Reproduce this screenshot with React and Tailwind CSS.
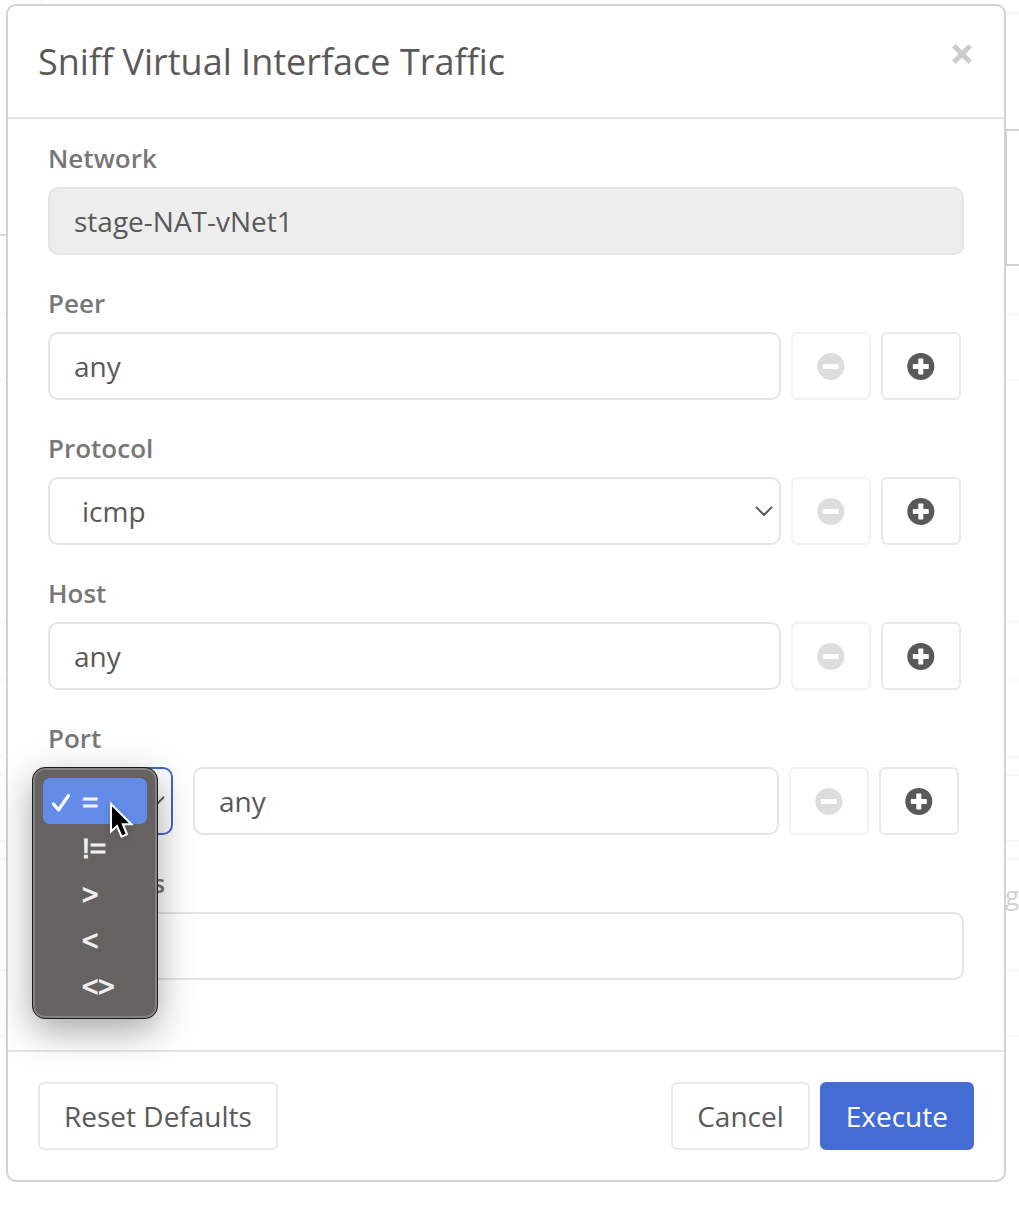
import { useState } from "react";

const fieldBase =
  "h-[68px] w-full min-w-0 rounded-[10px] border-2 text-[28px] leading-9 text-[#595959] outline-none";
const inputClass = `${fieldBase} border-[#e5e5e5] bg-white px-6`;
const readOnlyClass = `${fieldBase} border-[#e5e5e5] bg-[#ededed] px-6`;
const selectClass = `${fieldBase} appearance-none border-[#e5e5e5] bg-white pr-6 pl-8`;
const activeSelectClass = `${fieldBase} appearance-none border-[#3f68cf] bg-white pr-6 pl-8`;

function Chevron() {
  return (
    <svg
      viewBox="0 0 18 12"
      fill="none"
      aria-hidden="true"
      className="pointer-events-none absolute top-7 right-2 h-3 w-[18px]"
    >
      <path d="M1.5 2.4 L9 10 L16.5 2.4" stroke="#595959" strokeWidth="2" strokeLinecap="round" strokeLinejoin="round" />
    </svg>
  );
}

function CircleIcon({ plus }) {
  return (
    <svg viewBox="0 0 28 28" aria-hidden="true" className="size-7">
      <circle cx="13.8" cy="14.4" r="13.5" fill="#595959" />
      <rect x="5.8" y="12" width="16" height="5" rx="0.8" fill="#fff" />
      {plus && <rect x="11.3" y="6.5" width="5" height="16" rx="0.8" fill="#fff" />}
    </svg>
  );
}

function RowButtons({ name }) {
  const button = "flex h-[68px] w-20 shrink-0 items-center justify-center rounded-md border-2 bg-white";
  return (
    <>
      <button type="button" disabled aria-label={`Remove ${name}`} className={`${button} border-[#f2f2f2] [&>svg]:opacity-20`}>
        <CircleIcon />
      </button>
      <button type="button" aria-label={`Add ${name}`} className={`${button} border-[#e8e8e8]`}>
        <CircleIcon plus />
      </button>
    </>
  );
}

function Field({ id, label, children }) {
  return (
    <div>
      <label htmlFor={id} className="mb-[11px] block h-9 w-fit text-[26px] leading-9 font-semibold text-[#777777]">
        {label}
      </label>
      {children}
    </div>
  );
}

function Cursor() {
  return (
    <svg
      viewBox="0 0 26 40"
      aria-hidden="true"
      className="pointer-events-none absolute top-[34px] left-[60px] z-10 h-10 w-[26px] drop-shadow-md"
    >
      <path
        d="M3 3 V30.5 L9 25 L13.6 35.6 L19 33.3 L14.8 23.2 H23.4 Z"
        fill="#000"
        stroke="#fff"
        strokeWidth="2"
      />
    </svg>
  );
}

const operators = ["=", "!=", ">", "<", "<>"];

function OperatorMenu({ value, onPick }) {
  return (
    <ul
      role="listbox"
      aria-label="Port operator"
      className="absolute top-0 -left-4 z-10 w-[126px] rounded-[13px] border border-[#1c1c1c] bg-[#666262] p-[10px] shadow-[0_12px_36px_rgba(0,0,0,0.35)] inset-ring-2 inset-ring-[#858282]"
    >
      {operators.map((op) => (
        <li
          key={op}
          role="option"
          aria-selected={op === value}
          onClick={() => onPick(op)}
          className="flex h-[46px] items-center rounded-[7px] pt-1 pl-2 font-['Liberation_Sans',sans-serif] text-[28px] leading-[42px] text-[#f0f0f0] [-webkit-text-stroke:1px] aria-selected:bg-[#648be8]"
        >
          <span className="w-[31px]">
            {op === value && (
              <svg viewBox="0 0 20 20" fill="none" aria-hidden="true" className="size-5">
                <path d="M2.5 11 L7.5 17 L17.5 2.5" stroke="#fff" strokeWidth="3.2" strokeLinecap="round" strokeLinejoin="round" />
              </svg>
            )}
          </span>
          {op}
        </li>
      ))}
    </ul>
  );
}

function Backdrop() {
  return (
    <div aria-hidden="true" className="absolute inset-0 overflow-hidden">
      <div className="h-[14px] border-b-2 border-[#f6f6f6]">
        <div className="h-full w-[43px] border-r-2 border-[#f6f6f6]" />
      </div>
      <div className="flex h-[222px]">
        <div className="w-1.5 border-b-2 border-[#d0daf5]" />
        <div className="mt-[115px] ml-auto h-[137px] w-[14px] border-2 border-r-0 border-[#d2d2d2]" />
      </div>
      <div className="h-[79px] border-b-2 border-[#f8f8f8]" />
      <div className="h-[66px] border-b-2 border-[#f8f8f8]" />
      <div className="h-[242px] border-b-2 border-[#f8f8f8]" />
      <div className="h-[58px] border-b-2 border-[#f8f8f8]" />
      <div className="h-[77px] border-b-2 border-[#f8f8f8]" />
      <div className="h-[18px] border-b-2 border-[#f8f8f8]" />
      <div className="h-[66px] border-b-2 border-[#f8f8f8]" />
      <div className="h-[18px] border-b-2 border-[#f8f8f8]" />
      <div className="flex h-[111px] justify-end border-b-2 border-[#f8f8f8] pt-[17px] text-[26px] leading-9 text-[#d2d2d2]">g</div>
      <div className="h-[66px] border-b-2 border-[#f8f8f8]" />
    </div>
  );
}

export default function App() {
  const [operator, setOperator] = useState("=");
  const footerButton = "h-[68px] rounded-md border-2 px-6 text-[28px] leading-9";

  return (
    <div className="relative min-h-screen bg-white font-['Open_Sans',sans-serif] text-[#595959]">
      <Backdrop />
      <div className="relative pt-1 pr-[13px] pb-[31px] pl-1.5">
        <form
          role="dialog"
          aria-labelledby="dialog-title"
          onSubmit={(e) => e.preventDefault()}
          className="rounded-[10px] border-2 border-[#d2d2d2] bg-white"
        >
          <header className="flex h-[113px] items-center justify-between border-b-2 border-[#e5e5e5] px-[30px]">
            <h1 id="dialog-title" className="text-4xl">
              Sniff Virtual Interface Traffic
            </h1>
            <button type="button" aria-label="Close" className="mb-4">
              <svg viewBox="0 0 24 24" aria-hidden="true" className="size-6">
                <path d="M5.6 5.6 L18.4 18.4 M18.4 5.6 L5.6 18.4" stroke="#cccccc" strokeWidth="5" strokeLinecap="square" />
              </svg>
            </button>
          </header>

          <main className="flex flex-col gap-[30px] px-10 pt-[21px] pb-[70px]">
            <Field id="network" label="Network">
              <input id="network" type="text" readOnly value="stage-NAT-vNet1" className={readOnlyClass} />
            </Field>

            <Field id="peer" label="Peer">
              <div className="flex gap-[10px] pr-[3px]">
                <input id="peer" type="text" defaultValue="any" className={inputClass} />
                <RowButtons name="peer" />
              </div>
            </Field>

            <Field id="protocol" label="Protocol">
              <div className="flex gap-[10px] pr-[3px]">
                <div className="relative min-w-0 flex-1">
                  <select id="protocol" defaultValue="icmp" className={selectClass}>
                    <option>any</option>
                    <option>icmp</option>
                    <option>tcp</option>
                    <option>udp</option>
                  </select>
                  <Chevron />
                </div>
                <RowButtons name="protocol" />
              </div>
            </Field>

            <Field id="host" label="Host">
              <div className="flex gap-[10px] pr-[3px]">
                <input id="host" type="text" defaultValue="any" className={inputClass} />
                <RowButtons name="host" />
              </div>
            </Field>

            <Field id="port" label="Port">
              <div className="flex gap-[10px] pr-[5px]">
                <div className="relative mr-[10px] w-[125px] shrink-0">
                  <select
                    aria-label="Operator"
                    value={operator}
                    onChange={(e) => setOperator(e.target.value)}
                    className={activeSelectClass}
                  >
                    {operators.map((op) => (
                      <option key={op}>{op}</option>
                    ))}
                  </select>
                  <Chevron />
                  <OperatorMenu value={operator} onPick={setOperator} />
                  <Cursor />
                </div>
                <input id="port" type="text" defaultValue="any" className={inputClass} />
                <RowButtons name="port" />
              </div>
            </Field>

            <Field id="flags" label="TCP Flags">
              <input id="flags" type="text" className={inputClass} />
            </Field>
          </main>

          <footer className="flex gap-[10px] border-t-2 border-[#e5e5e5] p-[30px]">
            <button type="reset" className={`${footerButton} mr-auto border-[#e8e8e8] bg-white`}>
              Reset Defaults
            </button>
            <button type="button" className={`${footerButton} border-[#e8e8e8] bg-white`}>
              Cancel
            </button>
            <button type="submit" className={`${footerButton} border-[#436cd4] bg-[#436cd4] text-white`}>
              Execute
            </button>
          </footer>
        </form>
      </div>
    </div>
  );
}
